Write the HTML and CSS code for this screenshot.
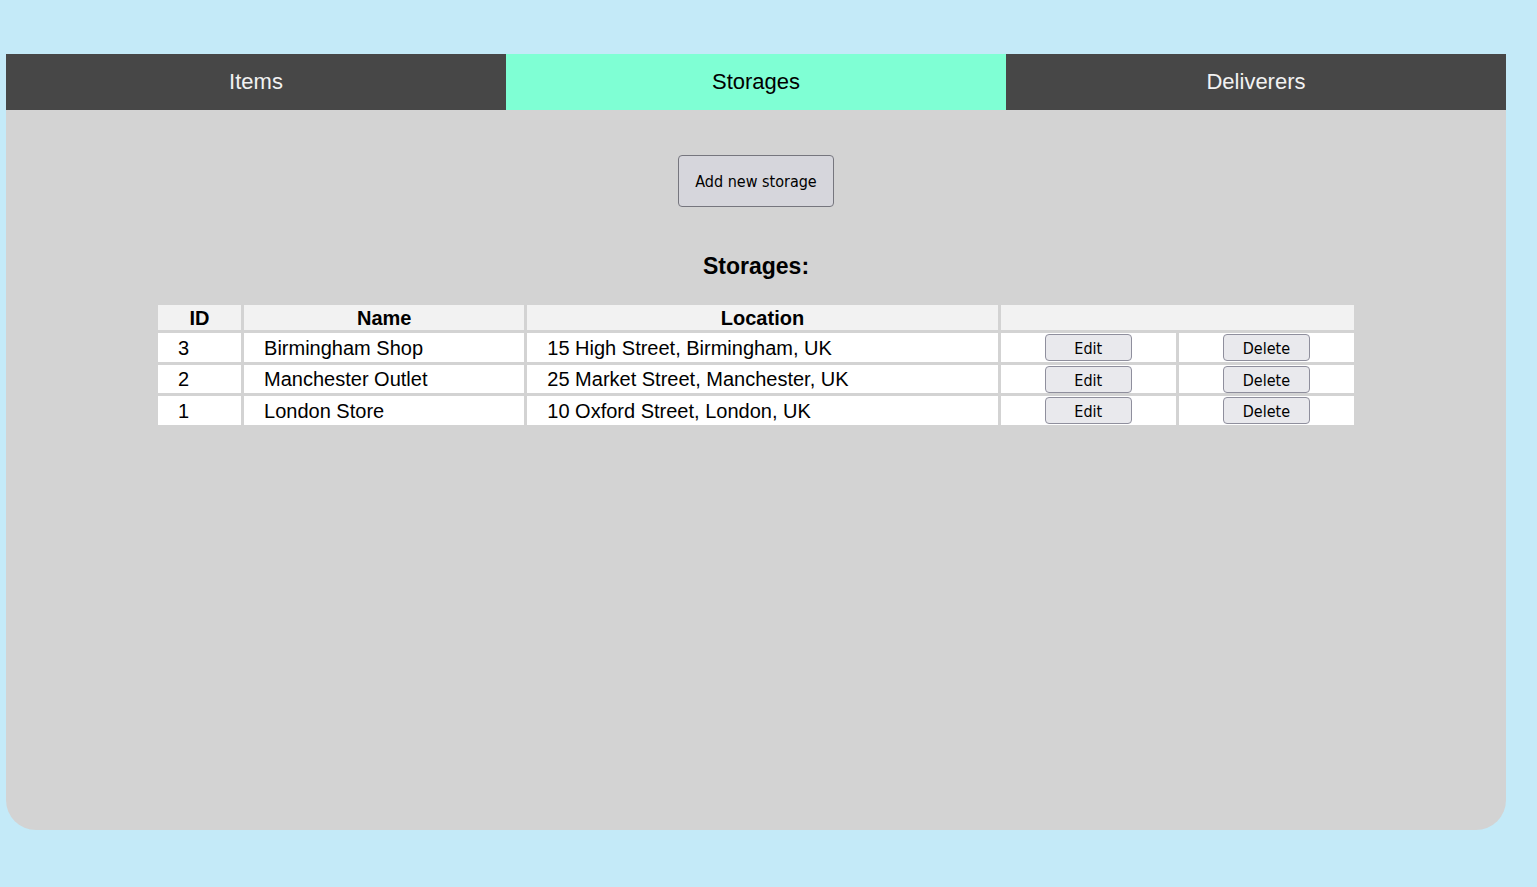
FILE: index.html
```html
<!DOCTYPE html>
<html>
<head>
<meta charset="utf-8">
<link rel="stylesheet" href="styles.css">
</head>
<body>
<div class="app">
  <nav class="tabs">
    <div class="tab">Items</div>
    <div class="tab active">Storages</div>
    <div class="tab">Deliverers</div>
  </nav>
  <main class="content">
    <div class="add-wrap"><button class="btn add-btn">Add new storage</button></div>
    <h2 class="title">Storages:</h2>
    <table class="storage-table">
      <thead>
        <tr>
          <th class="c-id">ID</th>
          <th class="c-name">Name</th>
          <th class="c-loc">Location</th>
          <th colspan="2"></th>
        </tr>
      </thead>
      <tbody>
        <tr>
          <td>3</td><td>Birmingham Shop</td><td>15 High Street, Birmingham, UK</td>
          <td class="c-act"><button class="btn row-btn">Edit</button></td>
          <td class="c-act"><button class="btn row-btn">Delete</button></td>
        </tr>
        <tr class="row-mid">
          <td>2</td><td>Manchester Outlet</td><td>25 Market Street, Manchester, UK</td>
          <td class="c-act"><button class="btn row-btn">Edit</button></td>
          <td class="c-act"><button class="btn row-btn">Delete</button></td>
        </tr>
        <tr>
          <td>1</td><td>London Store</td><td>10 Oxford Street, London, UK</td>
          <td class="c-act"><button class="btn row-btn">Edit</button></td>
          <td class="c-act"><button class="btn row-btn">Delete</button></td>
        </tr>
      </tbody>
    </table>
  </main>
</div>
</body>
</html>
```
FILE: styles.css
```css
html, body {
  margin: 0;
  padding: 0;
  background: #c4eaf8;
  font-family: "Liberation Sans", Arial, sans-serif;
}
.app {
  width: 1500px;
  margin: 54px 0 0 6px;
}
.tabs {
  display: flex;
  height: 56px;
}
.tab {
  flex: 1;
  display: flex;
  align-items: center;
  justify-content: center;
  background: #474747;
  color: #f2f2f2;
  font-size: 22px;
}
.tab.active {
  background: #7fffd4;
  color: #000;
}
.content {
  background: #d3d3d3;
  height: 675px;
  padding-top: 45px;
  border-radius: 0 0 30px 30px;
}
.add-wrap {
  display: flex;
  justify-content: center;
}
.btn {
  font-family: "DejaVu Sans Condensed", "DejaVu Sans", Verdana, sans-serif;
  font-stretch: condensed;
  font-size: 16px;
  color: #000;
  background: #e9e9ed;
  border: 1px solid #8f8f9d;
  border-radius: 4px;
  cursor: pointer;
}
.add-btn {
  width: 156px;
  height: 52px;
  padding: 0;
  background: #d6d6dc;
  border-color: #76767e;
}
.title {
  margin: 46px 0 22px;
  text-align: center;
  font-size: 23px;
  line-height: 27px;
  font-weight: bold;
}
.storage-table {
  width: 1202px;
  margin: 0 auto;
  border-spacing: 3px;
  font-size: 20px;
}
.storage-table th {
  background: #f2f2f2;
  height: 25px;
  padding: 1px 0 0;
  box-sizing: border-box;
  font-weight: bold;
  text-align: center;
  line-height: 23px;
}
.storage-table td {
  background: #fff;
  height: 29px;
  padding: 1px 20px 0;
  box-sizing: border-box;
  line-height: 23px;
}
.storage-table .row-mid td {
  height: 28px;
}
.c-id { width: 83px; }
.c-name { width: 280px; }
.c-loc { width: 470px; }
.storage-table td.c-act {
  width: 175px;
  padding: 0;
  text-align: center;
}
.row-btn {
  width: 87px;
  height: 27px;
  padding: 2px 0 0;
  vertical-align: middle;
}
```
